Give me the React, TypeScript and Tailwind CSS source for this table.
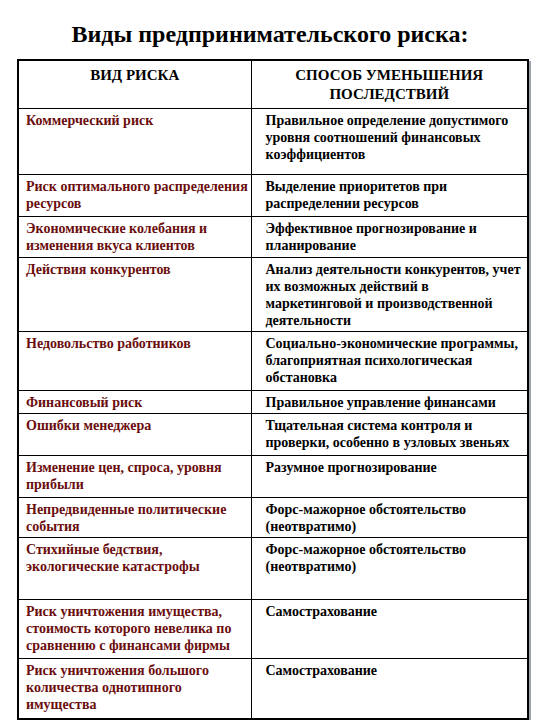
import React from "react";

type Row = { risk: string[]; way: string[]; h: number };

const rows: Row[] = [
  {
    risk: ["Коммерческий риск"],
    way: ["Правильное определение допустимого", "уровня соотношений финансовых", "коэффициентов"],
    h: 66,
  },
  {
    risk: ["Риск оптимального распределения", "ресурсов"],
    way: ["Выделение приоритетов при", "распределении ресурсов"],
    h: 42,
  },
  {
    risk: ["Экономические колебания и", "изменения вкуса клиентов"],
    way: ["Эффективное прогнозирование и", "планирование"],
    h: 41,
  },
  {
    risk: ["Действия конкурентов"],
    way: [
      "Анализ деятельности конкурентов, учет",
      "их возможных действий в",
      "маркетинговой и производственной",
      "деятельности",
    ],
    h: 74,
  },
  {
    risk: ["Недовольство работников"],
    way: ["Социально-экономические программы,", "благоприятная психологическая", "обстановка"],
    h: 59,
  },
  { risk: ["Финансовый риск"], way: ["Правильное управление финансами"], h: 23 },
  {
    risk: ["Ошибки менеджера"],
    way: ["Тщательная система контроля и", "проверки, особенно в узловых звеньях"],
    h: 42,
  },
  {
    risk: ["Изменение цен, спроса, уровня", "прибыли"],
    way: ["Разумное прогнозирование"],
    h: 42,
  },
  {
    risk: ["Непредвиденные политические", "события"],
    way: ["Форс-мажорное обстоятельство", "(неотвратимо)"],
    h: 40,
  },
  {
    risk: ["Стихийные бедствия,", "экологические катастрофы"],
    way: ["Форс-мажорное обстоятельство", "(неотвратимо)"],
    h: 62,
  },
  {
    risk: [
      "Риск уничтожения имущества,",
      "стоимость которого невелика по",
      "сравнению с финансами фирмы",
    ],
    way: ["Самострахование"],
    h: 59,
  },
  {
    risk: ["Риск уничтожения большого", "количества однотипного", "имущества"],
    way: ["Самострахование"],
    h: 60,
  },
];

function Lines({ lines }: { lines: string[] }) {
  return (
    <>
      {lines.map((l, i) => (
        <div key={i} className="whitespace-nowrap">
          {l}
        </div>
      ))}
    </>
  );
}

export default function App() {
  return (
    <div className="w-[540px] h-[720px] bg-white overflow-hidden [font-family:'Liberation_Serif','DejaVu_Serif',serif] font-bold">
      <h1 className="pt-[19px] h-[59px] text-center text-[24px] leading-[31px] text-black">
        Виды предпринимательского риска:
      </h1>
      <div className="ml-[17px] w-[512px] border-2 border-black shadow-[2px_2px_0_#9ca3af]">
        <table className="w-full table-fixed border-collapse">
          <colgroup>
            <col className="w-[232px]" />
            <col />
          </colgroup>
          <thead>
            <tr className="h-[47px] align-top text-[15px] leading-[19px] text-black">
              <th className="border-b border-r border-black pt-[5px] text-center font-bold">
                ВИД РИСКА
              </th>
              <th className="border-b border-black pt-[5px] text-center font-bold">
                <div>СПОСОБ УМЕНЬШЕНИЯ</div>
                <div>ПОСЛЕДСТВИЙ</div>
              </th>
            </tr>
          </thead>
          <tbody className="text-[14px] leading-[17px]">
            {rows.map((r, i) => (
              <tr key={i} style={{ height: r.h }} className="align-top">
                <td
                  className={`border-r border-black pl-[7px] pt-[3px] text-[#6b0d0d] ${
                    i < rows.length - 1 ? "border-b" : ""
                  }`}
                >
                  <Lines lines={r.risk} />
                </td>
                <td
                  className={`border-black pl-[14px] pt-[3px] text-black ${
                    i < rows.length - 1 ? "border-b" : ""
                  }`}
                >
                  <Lines lines={r.way} />
                </td>
              </tr>
            ))}
          </tbody>
        </table>
      </div>
    </div>
  );
}
